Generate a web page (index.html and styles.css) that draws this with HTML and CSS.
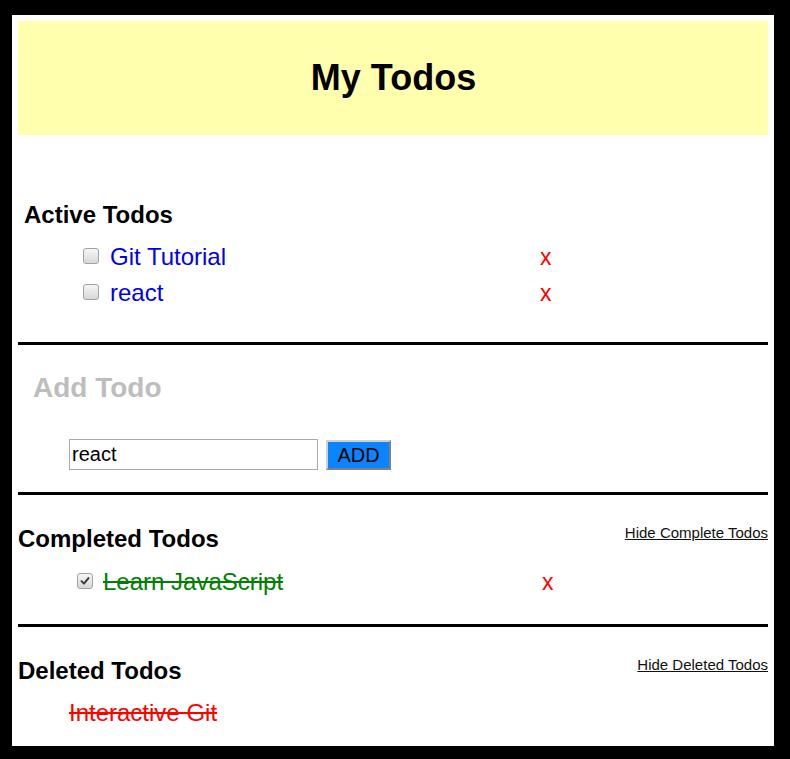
FILE: index.html
```html
<!DOCTYPE html>
<html>
<head>
<meta charset="utf-8">
<title>My Todos</title>
<link rel="stylesheet" href="styles.css">
</head>
<body>
<div class="panel">
  <header class="banner"><h1 class="title">My Todos</h1></header>

  <section class="active">
    <h3 class="sec-title active-title">Active Todos</h3>
    <ul class="todo-list">
      <li class="todo"><span class="box"></span><span class="label active-label">Git Tutorial</span><span class="del">x</span></li>
      <li class="todo"><span class="box"></span><span class="label active-label">react</span><span class="del">x</span></li>
    </ul>
  </section>

  <hr class="rule">

  <section class="add">
    <h2 class="add-title">Add Todo</h2>
    <form class="add-form">
      <input class="add-input" type="text" value="react">
      <button class="add-btn" type="button">ADD</button>
    </form>
  </section>

  <hr class="rule">

  <section class="completed">
    <div class="sec-head">
      <h3 class="sec-title">Completed Todos</h3>
      <a class="hide-link" href="#">Hide Complete Todos</a>
    </div>
    <ul class="todo-list done-list">
      <li class="todo"><span class="box checked"><svg viewBox="0 0 16 16" width="16" height="16"><path d="M4 8.2 L6.8 11 L12 4.6" fill="none" stroke="#3a3a3a" stroke-width="2.2" stroke-linecap="round" stroke-linejoin="round"/></svg></span><span class="label done-label">Learn JavaScript</span><span class="del">x</span></li>
    </ul>
  </section>

  <hr class="rule">

  <section class="deleted">
    <div class="sec-head">
      <h3 class="sec-title">Deleted Todos</h3>
      <a class="hide-link" href="#">Hide Deleted Todos</a>
    </div>
    <ul class="todo-list deleted-list">
      <li class="todo"><span class="label deleted-label">Interactive Git</span></li>
    </ul>
  </section>
</div>
</body>
</html>
```

FILE: styles.css
```css
html, body {
  margin: 0;
  padding: 0;
  background: #000;
}
body {
  font-family: "Liberation Sans", Arial, sans-serif;
  color: #000;
  padding: 15px 16px 13px 12px;
}
.panel {
  background: #fff;
  padding: 6px;
  height: 731px;
  box-sizing: border-box;
}
.banner {
  background: #ffffae;
  height: 114px;
  display: flex;
  align-items: center;
  justify-content: center;
}
.title {
  margin: 0;
  font-size: 36px;
  font-weight: bold;
  line-height: 40px;
  padding-left: 1px;
}
.sec-title {
  margin: 0;
  font-size: 24px;
  font-weight: bold;
  line-height: 28px;
}
.active {
  padding-top: 66px;
}
.active-title {
  padding-left: 6px;
}
.todo-list {
  list-style: none;
  margin: 10px 0 0 0;
  padding: 0;
}
.todo {
  display: flex;
  align-items: center;
  height: 36px;
  font-size: 24px;
}
.active .todo {
  padding-left: 65px;
}
.box {
  width: 16px;
  height: 16px;
  box-sizing: border-box;
  border: 1px solid #a2a2a2;
  border-radius: 3px;
  background: linear-gradient(#f6f6f6, #d8d8d8);
  margin-right: 11px;
  margin-top: -2px;
  flex: none;
  display: flex;
  align-items: center;
  justify-content: center;
}
.box svg {
  display: block;
}
.label {
  line-height: 36px;
}
.active-label {
  color: #0000ee;
  width: 430px;
}
.del {
  color: #ff0000;
  font-size: 23px;
}
.rule {
  margin: 0;
  border: 0;
  height: 3px;
  background: #000;
}
.active + .rule {
  margin-top: 31px;
}
.add {
  padding-top: 27px;
  padding-bottom: 22px;
}
.add-title {
  margin: 0;
  padding-left: 15px;
  font-size: 28px;
  line-height: 32px;
  color: #bdbdbd;
  font-weight: bold;
}
.add-form {
  margin: 35px 0 0 51px;
  display: flex;
  align-items: flex-end;
  gap: 8px;
}
.add-input {
  width: 249px;
  height: 31px;
  box-sizing: border-box;
  border: 1px solid #a9a9a9;
  padding: 0 2px;
  font-family: "Liberation Sans", Arial, sans-serif;
  font-size: 20px;
  color: #000;
  outline: none;
}
.add-btn {
  width: 65px;
  height: 30px;
  box-sizing: border-box;
  background: #0a84ff;
  border: 2px solid;
  border-color: #d0d0d0 #808080 #808080 #d0d0d0;
  font-family: "Liberation Sans", Arial, sans-serif;
  font-size: 20px;
  color: #000;
  padding: 0;
  line-height: 26px;
}
.sec-head {
  display: flex;
  justify-content: space-between;
  align-items: flex-start;
}
.hide-link {
  color: #111;
  font-size: 15px;
  text-decoration: underline;
  line-height: 18px;
  margin-top: -1px;
}
.completed {
  padding-top: 30px;
  padding-bottom: 24px;
}
.done-list {
  margin-top: 11px;
}
.completed .todo {
  padding-left: 59px;
}
.completed .box {
  margin-right: 10px;
}
.done-label {
  color: #008000;
  text-decoration: line-through;
  width: 439px;
}
.deleted {
  padding-top: 30px;
}
.deleted-list {
  margin-top: 10px;
}
.deleted .todo {
  padding-left: 51px;
}
.deleted-label {
  color: #ff0000;
  text-decoration: line-through;
}
```
